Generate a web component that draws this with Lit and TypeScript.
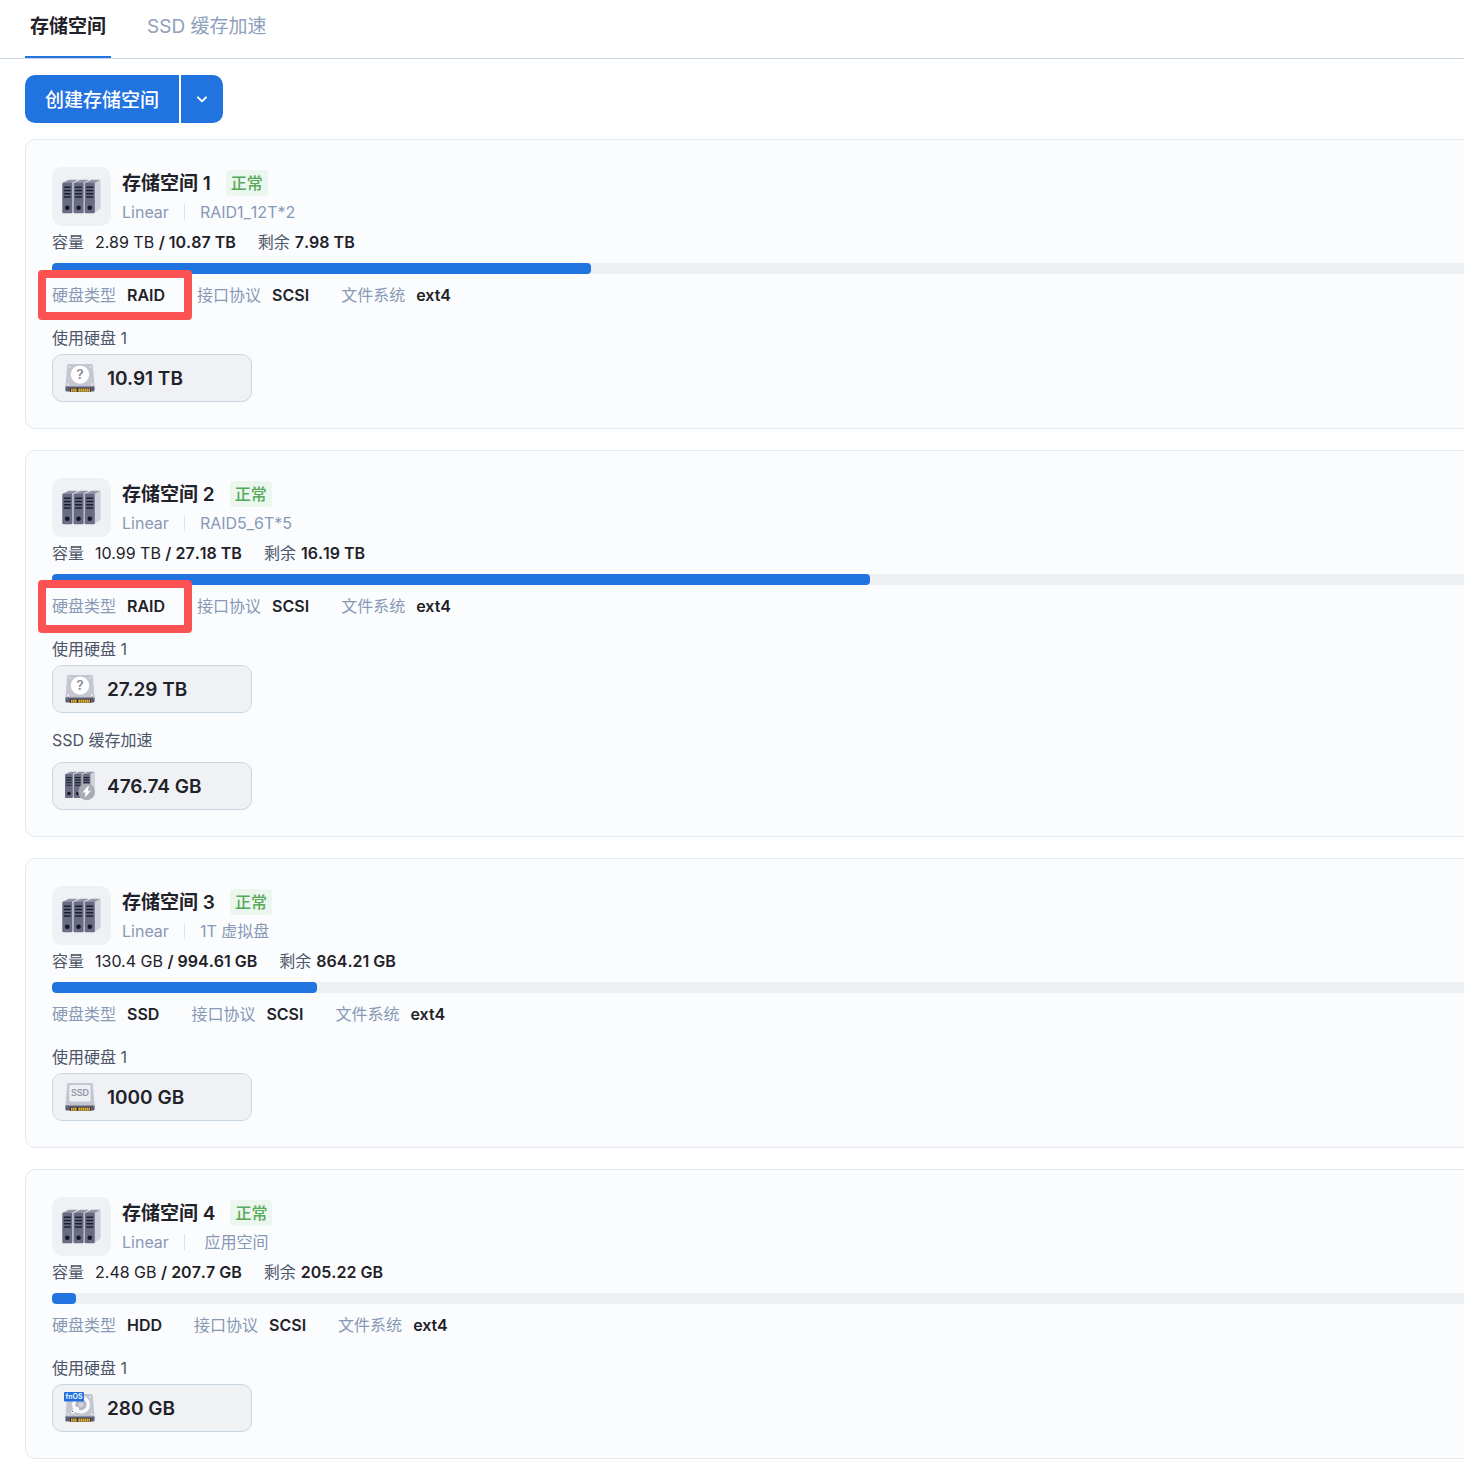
import { LitElement, html, css, svg, nothing } from "lit";
import { customElement, property } from "lit/decorators.js";
import { classMap } from "lit/directives/class-map.js";
import { styleMap } from "lit/directives/style-map.js";

type DriveKind = "unknown" | "cache" | "ssd" | "system";

interface Volume {
  name: string;
  status: string;
  mode: string;
  note: string;
  used: string;
  total: string;
  free: string;
  percent: number;
  diskType: string;
  protocol: string;
  fileSystem: string;
  mark?: "compact" | "tall";
  groups: { label: string; kind: DriveKind; size: string }[];
}

const VOLUMES: Volume[] = [
  {
    name: "存储空间 1",
    status: "正常",
    mode: "Linear",
    note: "RAID1_12T*2",
    used: "2.89 TB",
    total: "10.87 TB",
    free: "7.98 TB",
    percent: 26.6,
    diskType: "RAID",
    protocol: "SCSI",
    fileSystem: "ext4",
    mark: "compact",
    groups: [{ label: "使用硬盘 1", kind: "unknown", size: "10.91 TB" }],
  },
  {
    name: "存储空间 2",
    status: "正常",
    mode: "Linear",
    note: "RAID5_6T*5",
    used: "10.99 TB",
    total: "27.18 TB",
    free: "16.19 TB",
    percent: 40.4,
    diskType: "RAID",
    protocol: "SCSI",
    fileSystem: "ext4",
    mark: "tall",
    groups: [
      { label: "使用硬盘 1", kind: "unknown", size: "27.29 TB" },
      { label: "SSD 缓存加速", kind: "cache", size: "476.74 GB" },
    ],
  },
  {
    name: "存储空间 3",
    status: "正常",
    mode: "Linear",
    note: "1T 虚拟盘",
    used: "130.4 GB",
    total: "994.61 GB",
    free: "864.21 GB",
    percent: 13.1,
    diskType: "SSD",
    protocol: "SCSI",
    fileSystem: "ext4",
    groups: [{ label: "使用硬盘 1", kind: "ssd", size: "1000 GB" }],
  },
  {
    name: "存储空间 4",
    status: "正常",
    mode: "Linear",
    note: " 应用空间",
    used: "2.48 GB",
    total: "207.7 GB",
    free: "205.22 GB",
    percent: 1.19,
    diskType: "HDD",
    protocol: "SCSI",
    fileSystem: "ext4",
    groups: [{ label: "使用硬盘 1", kind: "system", size: "280 GB" }],
  },
];

/* One rack unit: sloped lid, front panel, four vents and a power knob. */
const rackUnit = (x: number) => svg`
  <path d="M${x} 16 L${x + 6.5} 12.8 H${x + 15.5} L${x + 10} 16 Z" fill="#9496a8"/>
  <rect x=${x} y="15.7" width="10" height="30.6" rx="1" fill="#686b82"/>
  <path d="M${x + 1.5} 20.2h7M${x + 1.5} 23.5h7M${x + 1.5} 26.8h7M${x + 1.5} 30.1h7" stroke="#1d2032" stroke-width="1.5"/>
  <circle cx=${x + 5} cy="40.7" r="2.3" fill="#14172a"/>
`;

const rack = svg`
  <path d="M42.5 16 L48.6 12.8 V41.5 L42.5 46 Z" fill="#d0d1da"/>
  <path d="M20.2 16.5 l1.6 -.8 v30 h-1.6z M31.3 16.5 l1.8 -.8 v30 h-1.8z" fill="#d0d1da"/>
  ${rackUnit(10.3)}${rackUnit(21.6)}${rackUnit(32.8)}
`;

/* Shared drive body: tapered metal plate over a dark connector edge. */
const driveBody = svg`
  <path d="M3.6 1 H26.4 Q27.6 1 27.8 2.4 L29.6 24 H.4 L2.2 2.4 Q2.4 1 3.6 1Z" fill="#c4c7d1"/>
  <path d="M.4 23.4 H29.6 V27 Q29.6 28.6 28 28.6 H2 Q.4 28.6 .4 27Z" fill="#5a5f76"/>
  <path d="M5 25h20.8v3.8H5z" fill="#2c2e3c"/>
  <path d="M6 27.2h5.8M13.4 27.2h12" stroke="#e0b132" stroke-width="3.2" stroke-dasharray="1.6 .4"/>
`;

const screws = svg`
  <circle cx="4.8" cy="3.8" r=".9" fill="#eceef3"/><circle cx="25.2" cy="3.8" r=".9" fill="#eceef3"/>
  <circle cx="3.2" cy="21.2" r=".9" fill="#eceef3"/><circle cx="26.8" cy="21.2" r=".9" fill="#eceef3"/>
`;

const driveArt: Record<DriveKind, unknown> = {
  unknown: svg`${driveBody}${screws}
    <circle cx="15" cy="11.6" r="9.2" fill="#fff"/>
    <text x="15" y="16.4" text-anchor="middle" class="glyph" font-size="13" fill="#80859a">?</text>`,
  ssd: svg`${driveBody}
    <rect x="4.4" y="3" width="21.2" height="16.6" rx="1.4" fill="#eef0f4"/>
    <text x="15" y="14.4" text-anchor="middle" class="glyph" font-size="9" fill="#9094a6">SSD</text>`,
  system: svg`${driveBody}${screws}
    <circle cx="16" cy="11.6" r="9" fill="#fbfbfd"/>
    <circle cx="16" cy="11.6" r="5.6" fill="#b4b7c3"/>
    <circle cx="16" cy="11.6" r="2.6" fill="#cfd2da"/>
    <path d="M7.6 19 L12.4 15.6" stroke="#fbfbfd" stroke-width="3.4" stroke-linecap="round"/>
    <circle cx="7.4" cy="18.4" r=".7" fill="#5c6074"/>
    <rect x="-1" y="-1" width="20" height="9.4" rx="1" fill="#1f6fe0"/>
    <text x="9" y="6.3" text-anchor="middle" class="glyph" font-size="7" fill="#fff">fnOS</text>`,
  cache: svg`
    <g transform="translate(-8 -9.2) scale(.78)">${rack}</g>
    <circle cx="21.6" cy="20.8" r="8.4" fill="#aaabb3"/>
    <path d="M22.8 15.2 L17.4 21.6 h3.2 l-.8 5 L26 19.8 h-3.4 l1.6 -4.6z" fill="#fff"/>`,
};

@customElement("storage-volume")
export class StorageVolume extends LitElement {
  @property({ attribute: false }) volume!: Volume;

  static styles = css`
    :host {
      display: block;
      box-sizing: border-box;
      padding: 27px 26px 26px;
      border: 1px solid #e1e8ef;
      border-radius: 10px;
      background: #fbfcfe;
    }
    h2,
    p,
    dl,
    dd {
      margin: 0;
    }
    .head {
      display: flex;
      gap: 11px;
    }
    .avatar {
      width: 59px;
      height: 59px;
      border-radius: 10px;
      background: #f0f1f5;
    }
    .avatar svg {
      display: block;
    }
    .titles {
      display: flex;
      flex-direction: column;
      gap: 4px;
      padding-top: 3px;
    }
    .title-row {
      display: flex;
      align-items: center;
      gap: 15px;
      height: 26px;
    }
    .name {
      padding-top: 2px;
      font-size: 19px;
      font-weight: 600;
      line-height: 26px;
      color: #1f2228;
    }
    .status {
      padding: 0 5px;
      border-radius: 4px;
      font-weight: 500;
      line-height: 26px;
      color: #57a95a;
      background: #ebf6ee;
    }
    .sub {
      display: flex;
      align-items: center;
      gap: 15px;
      color: #8799b5;
      white-space: pre;
    }
    .note,
    b {
      font-kerning: none;
    }
    .rule {
      width: 1px;
      height: 16px;
      background: #dbe3ec;
    }
    .capacity {
      display: flex;
      gap: 22px;
      margin-top: 4px;
      color: #4d566a;
    }
    .value {
      color: #1f2228;
    }
    .used {
      margin-left: 11px;
    }
    .free {
      margin-left: 5px;
    }
    b,
    .spec dd {
      font-weight: 600;
      color: #1f2228;
    }
    .track {
      height: 11px;
      margin: 9px 0;
      border-radius: 4px;
      background: #eef1f4;
      overflow: hidden;
    }
    .fill {
      height: 100%;
      border-radius: 4px;
      background: #2173df;
    }
    .specs {
      display: flex;
      gap: 32px;
    }
    .spec {
      position: relative;
      display: flex;
      gap: 11px;
    }
    .spec dt {
      color: #8799b5;
    }
    .mark {
      position: absolute;
      box-sizing: border-box;
      left: -14px;
      top: -13px;
      width: 154px;
      height: 50px;
      border: 8px solid #fc5252;
      border-radius: 4px;
      pointer-events: none;
    }
    .mark.tall {
      top: -14px;
      height: 53px;
    }
    .group {
      display: flex;
      flex-direction: column;
      align-items: flex-start;
      gap: 4px;
      margin-top: 19px;
      color: #4d566a;
    }
    .group + .group {
      gap: 10px;
      margin-top: 15px;
    }
    .drive {
      display: flex;
      align-items: center;
      gap: 12px;
      box-sizing: border-box;
      width: 200px;
      height: 48px;
      padding: 0 12px;
      border: 1px solid #cad6e2;
      border-radius: 10px;
      background: #f0f1f5;
      font: inherit;
      font-size: 19px;
      font-weight: 600;
      color: #1f2228;
      cursor: pointer;
    }
    .drive svg {
      display: block;
      overflow: visible;
    }
    .drive span {
      padding-top: 2px;
    }
    .glyph {
      font-family: Inter, sans-serif;
      font-weight: 600;
    }
  `;

  render() {
    const v = this.volume;
    return html`
      <div class="head">
        <div class="avatar">
          <svg width="59" height="59" viewBox="0 0 59 59" aria-hidden="true">${rack}</svg>
        </div>
        <div class="titles">
          <div class="title-row">
            <h2 class="name">${v.name}</h2>
            <span class="status">${v.status}</span>
          </div>
          <div class="sub"><span>${v.mode}</span><span class="rule"></span><span class="note">${v.note}</span></div>
        </div>
      </div>
      <div class="capacity">
        <span>容量<span class="value used">${v.used} <b>/ ${v.total}</b></span></span>
        <span>剩余<b class="free">${v.free}</b></span>
      </div>
      <div class="track"><div class="fill" style=${styleMap({ width: `${v.percent}%` })}></div></div>
      <dl class="specs">
        <div class="spec">
          <dt>硬盘类型</dt>
          <dd>${v.diskType}</dd>
          ${v.mark
            ? html`<span class=${classMap({ mark: true, tall: v.mark === "tall" })}></span>`
            : nothing}
        </div>
        <div class="spec"><dt>接口协议</dt><dd>${v.protocol}</dd></div>
        <div class="spec"><dt>文件系统</dt><dd>${v.fileSystem}</dd></div>
      </dl>
      ${v.groups.map(
        (g) => html`
          <section class="group">
            <p>${g.label}</p>
            <button class="drive" type="button">
              <svg width="30" height="30" viewBox="0 0 30 30" aria-hidden="true">${driveArt[g.kind]}</svg>
              <span>${g.size}</span>
            </button>
          </section>
        `
      )}
    `;
  }
}

@customElement("app-root")
export class AppRoot extends LitElement {
  static styles = css`
    :host {
      display: block;
      box-sizing: border-box;
      min-height: 100vh;
      padding-bottom: 9px;
      overflow: hidden;
      background: #fff;
      font-family: Inter, "Noto Sans CJK SC", sans-serif;
      font-size: 16px;
      line-height: 24px;
    }
    .tabs {
      display: flex;
      gap: 31px;
      padding: 0 25px;
      border-bottom: 1px solid #c9d6e3;
    }
    .tab {
      box-sizing: border-box;
      height: 58px;
      padding: 0 5px 2px;
      border: 0;
      border-bottom: 2px solid transparent;
      background: none;
      font: inherit;
      font-size: 19px;
      color: #8ea0ba;
      cursor: pointer;
    }
    .tab.active {
      border-bottom-color: #2173df;
      font-weight: 600;
      color: #1f2228;
    }
    .actions {
      display: flex;
      gap: 2px;
      padding: 16px 25px;
    }
    .create,
    .more {
      height: 48px;
      border: 0;
      background: #2173df;
      color: #fff;
      font: inherit;
      font-size: 19px;
      font-weight: 500;
      cursor: pointer;
    }
    .create {
      padding: 4px 20px 0;
      border-radius: 10px 0 0 10px;
    }
    .more {
      display: grid;
      place-items: center;
      width: 42px;
      padding: 0;
      border-radius: 0 10px 10px 0;
    }
    .list {
      display: flex;
      flex-direction: column;
      gap: 21px;
      width: 142vw;
      margin-left: 25px;
    }
  `;

  render() {
    return html`
      <nav class="tabs" role="tablist">
        <button class="tab active" type="button" role="tab" aria-selected="true">存储空间</button>
        <button class="tab" type="button" role="tab" aria-selected="false">SSD 缓存加速</button>
      </nav>
      <div class="actions">
        <button class="create" type="button">创建存储空间</button>
        <button class="more" type="button" aria-label="更多">
          <svg width="16" height="16" viewBox="0 0 16 16" fill="none" aria-hidden="true">
            <path d="M4 6.4 L8 10.4 L12 6.4" stroke="#fff" stroke-width="2" stroke-linecap="round" stroke-linejoin="round"/>
          </svg>
        </button>
      </div>
      <main class="list">
        ${VOLUMES.map((v) => html`<storage-volume .volume=${v}></storage-volume>`)}
      </main>
    `;
  }
}
